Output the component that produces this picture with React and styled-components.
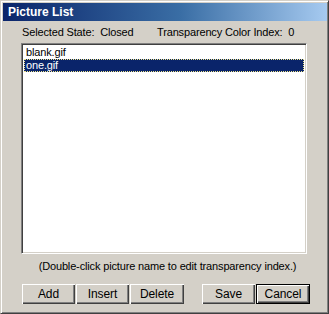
import styled, { createGlobalStyle } from "styled-components";

const GlobalStyle = createGlobalStyle`
  html, body {
    margin: 0;
    padding: 0;
    background: #d4d0c8;
  }
  body {
    font-family: "Liberation Sans", Arial, sans-serif;
    font-size: 11px;
    letter-spacing: -0.15px;
    color: #000;
  }
`;

const Window = styled.div`
  box-sizing: border-box;
  width: 329px;
  height: 314px;
  padding: 1px;
  background: #d4d0c8;
  border-top: 1px solid #d4d0c8;
  border-left: 1px solid #d4d0c8;
  border-right: 1px solid #404040;
  border-bottom: 1px solid #404040;
  box-shadow: inset 1px 1px 0 #ffffff, inset -1px -1px 0 #808080;
  display: flex;
  flex-direction: column;
`;

const TitleBar = styled.div`
  height: 18px;
  margin: 1px 0 0 1px;
  padding-left: 5px;
  display: flex;
  align-items: center;
  background: linear-gradient(to right, #0a246a 0%, #3a6ea5 55%, #a6caf0 100%);
  color: #fff;
  font-weight: bold;
  font-size: 12px;
  letter-spacing: 0;
`;

const Body = styled.div`
  flex: 1;
  display: flex;
  flex-direction: column;
  padding: 5px 17px 0 17px;
`;

const InfoRow = styled.div`
  display: flex;
  height: 13px;
  line-height: 13px;
  padding-left: 3px;
  white-space: pre;
`;

const InfoItem = styled.span`
  width: ${(p) => p.$w}px;
`;

const ListBox = styled.div`
  box-sizing: border-box;
  margin-top: 4px;
  margin-left: 2px;
  width: 286px;
  height: 211px;
  background: #fff;
  border-top: 1px solid #808080;
  border-left: 1px solid #808080;
  border-right: 1px solid #ffffff;
  border-bottom: 1px solid #ffffff;
  box-shadow: inset 1px 1px 0 #404040, inset -1px -1px 0 #d4d0c8;
  padding: 2px;
  display: flex;
  flex-direction: column;
`;

const ListRow = styled.div`
  box-sizing: border-box;
  height: 13px;
  line-height: 11px;
  padding-left: 1px;
  border: 1px dotted ${(p) => (p.$selected ? "#f0e68c" : "transparent")};
  background: ${(p) => (p.$selected ? "#0a246a" : "transparent")};
  color: ${(p) => (p.$selected ? "#fff" : "#000")};
`;

const Hint = styled.div`
  margin-top: 6px;
  height: 13px;
  line-height: 13px;
  text-align: center;
  padding-left: 6px;
`;

const ButtonRow = styled.div`
  display: flex;
  margin-top: 11px;
  padding-left: 3px;
`;

const Group = styled.div`
  display: flex;
  gap: 1px;
`;

const Spacer = styled.div`
  width: 18px;
`;

const Button = styled.button`
  box-sizing: border-box;
  width: ${(p) => p.$w || 53}px;
  height: 20px;
  padding: 0;
  font-family: "Liberation Sans", Arial, sans-serif;
  font-size: 12px;
  letter-spacing: -0.1px;
  color: #000;
  background: #d4d0c8;
  border: none;
  box-shadow: ${(p) =>
    p.$default
      ? "inset 0 0 0 1px #000, inset 1px 1px 0 1px #fff, inset -1px -1px 0 1px #404040, inset -2px -2px 0 1px #808080"
      : "inset 1px 1px 0 #fff, inset -1px -1px 0 #404040, inset -2px -2px 0 #808080"};
`;

export default function App() {
  return (
    <>
      <GlobalStyle />
      <Window>
        <TitleBar>Picture List</TitleBar>
        <Body>
          <InfoRow>
            <InfoItem $w={135}>Selected State:  Closed</InfoItem>
            <InfoItem $w={140}>Transparency Color Index:  0</InfoItem>
          </InfoRow>
          <ListBox>
            <ListRow>blank.gif</ListRow>
            <ListRow $selected>one.gif</ListRow>
          </ListBox>
          <Hint>(Double-click picture name to edit transparency index.)</Hint>
          <ButtonRow>
            <Group>
              <Button>Add</Button>
              <Button>Insert</Button>
              <Button $w={54}>Delete</Button>
            </Group>
            <Spacer />
            <Group>
              <Button>Save</Button>
              <Button $default $w={54}>Cancel</Button>
            </Group>
          </ButtonRow>
        </Body>
      </Window>
    </>
  );
}
